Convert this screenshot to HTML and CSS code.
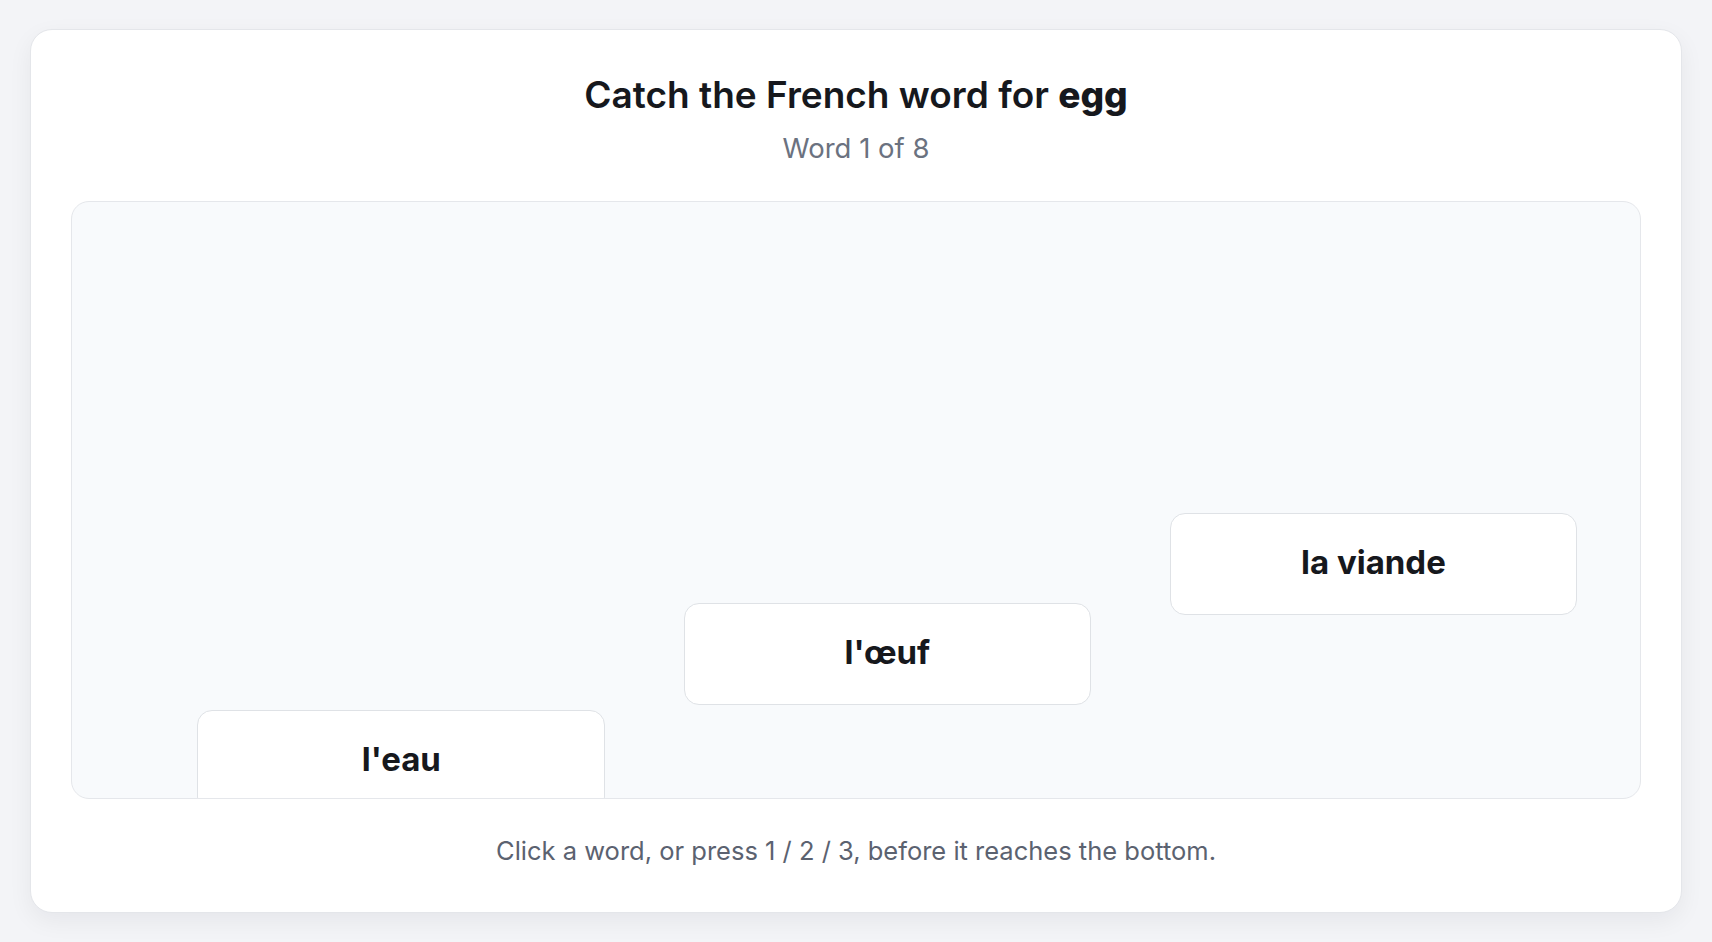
FILE: index.html
```html
<!DOCTYPE html>
<html lang="en">
<head>
<meta charset="UTF-8">
<meta name="viewport" content="width=device-width, initial-scale=1.0">
<title>Word Catch</title>
<link rel="stylesheet" href="styles.css">
</head>
<body>
<div class="card">
    <h1 class="prompt">Catch the French word for <strong>egg</strong></h1>
    <div class="progress">Word 1 of 8</div>
    <div class="play-area" id="playArea">
        <button class="word" style="left: 8%; top: 508px;">l'eau</button>
        <button class="word" style="left: 39%; top: 401px;">l'œuf</button>
        <button class="word" style="left: 70%; top: 311px;">la viande</button>
    </div>
    <p class="hint">Click a word, or press 1 / 2 / 3, before it reaches the bottom.</p>
</div>
</body>
</html>
```

FILE: styles.css
```css
/* Word catch game */
* {
    box-sizing: border-box;
}
body {
    margin: 0;
    padding: 29px 30px;
    background-color: #f3f4f7;
    font-family: Inter, "Noto Sans", sans-serif;
    color: #16181d;
}
.card {
    height: 884px;
    padding: 42px 40px 0;
    background-color: #fff;
    border: 1px solid #e4e6ea;
    border-radius: 22px;
    box-shadow: 0 8px 24px rgba(17, 24, 39, 0.06);
    display: flex;
    flex-direction: column;
    align-items: center;
}
.prompt {
    margin: 0;
    font-size: 37px;
    line-height: 46px;
    font-weight: 600;
}
.prompt strong {
    font-weight: 800;
}
.progress {
    margin-top: 14px;
    font-size: 27.5px;
    line-height: 32px;
    color: #6b7280;
}
.play-area {
    position: relative;
    width: 100%;
    height: 598px;
    margin-top: 37px;
    background-color: #f8fafc;
    border: 1px solid #e5e7eb;
    border-radius: 18px;
    overflow: hidden;
}
.word {
    position: absolute;
    width: 26%;
    height: 102px;
    padding: 0 0 5px;
    background-color: #fff;
    border: 1px solid #dfe2e6;
    border-radius: 15px;
    font-family: inherit;
    font-size: 33px;
    font-weight: 700;
    color: #16181d;
    cursor: pointer;
}
.hint {
    margin: 37px 0 0;
    font-size: 25.5px;
    line-height: 30px;
    color: #5b6270;
}
```
